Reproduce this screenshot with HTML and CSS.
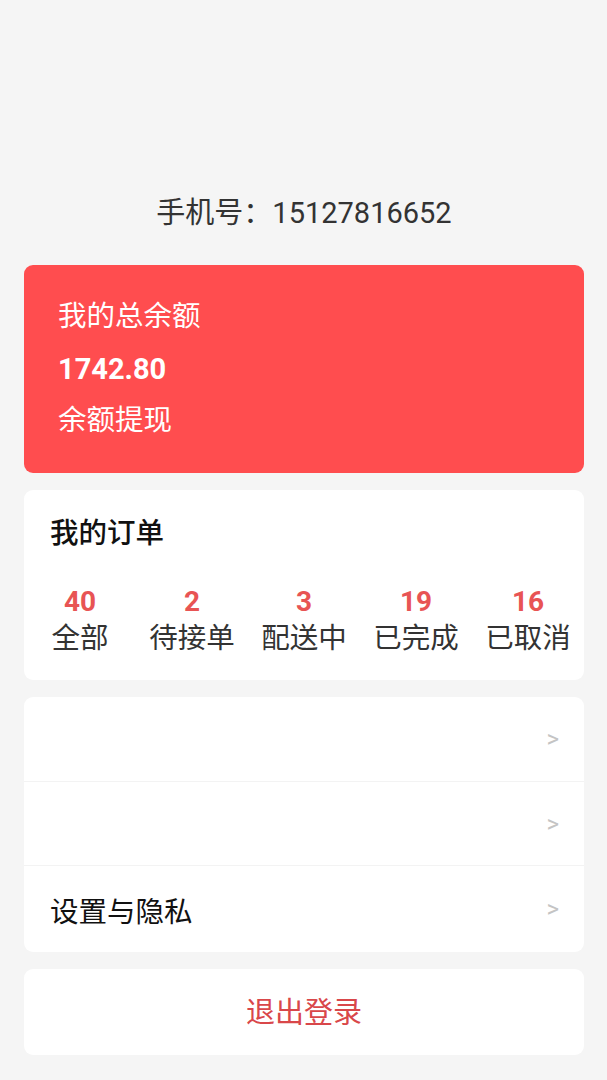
FILE: index.html
```html
<!DOCTYPE html>
<html lang="zh-CN">

<head>
    <meta charset="UTF-8" />
    <title>我的</title>
    <link rel="stylesheet" href="styles.css">
</head>

<body>
    <div class="page">
        <div class="header">手机号：15127816652</div>

        <div class="card balance">
            <div class="balance-row">我的总余额</div>
            <div class="balance-row balance-num">1742.80</div>
            <div class="balance-row">余额提现</div>
        </div>

        <div class="card orders">
            <div class="orders-title">我的订单</div>
            <div class="orders-grid">
                <div class="order-item">
                    <span class="order-num">40</span>
                    <span class="order-label">全部</span>
                </div>
                <div class="order-item">
                    <span class="order-num">2</span>
                    <span class="order-label">待接单</span>
                </div>
                <div class="order-item">
                    <span class="order-num">3</span>
                    <span class="order-label">配送中</span>
                </div>
                <div class="order-item">
                    <span class="order-num">19</span>
                    <span class="order-label">已完成</span>
                </div>
                <div class="order-item">
                    <span class="order-num">16</span>
                    <span class="order-label">已取消</span>
                </div>
            </div>
        </div>

        <div class="card menu">
            <div class="menu-row">
                <span class="menu-text"></span>
                <span class="arrow">&gt;</span>
            </div>
            <div class="menu-row">
                <span class="menu-text"></span>
                <span class="arrow">&gt;</span>
            </div>
            <div class="menu-row">
                <span class="menu-text">设置与隐私</span>
                <span class="arrow">&gt;</span>
            </div>
        </div>

        <div class="card logout">退出登录</div>
    </div>
</body>

</html>
```

FILE: styles.css
```css
body {
    margin: 0;
    background-color: #f5f5f5;
    font-family: Roboto, "Noto Sans CJK SC", sans-serif;
}

.page {
    display: flex;
    flex-direction: column;
    gap: 17px;
    padding: 0 23px 0 24px;
}

.header {
    padding-top: 193px;
    margin-bottom: 15px;
    line-height: 40px;
    font-size: 29px;
    color: #333;
    text-align: center;
}

.card {
    background-color: #fff;
    border-radius: 9px;
}

.balance {
    background-color: #ff4d4f;
    color: #fff;
    padding: 26px 34px;
}

.balance-row {
    line-height: 52px;
    font-size: 28.5px;
}

.balance-num {
    font-size: 29px;
    font-weight: bold;
}

.orders {
    padding: 18px 0 22px;
}

.orders-title {
    padding-left: 26px;
    line-height: 52px;
    font-size: 28.5px;
    font-weight: 500;
    color: #111;
}

.orders-grid {
    display: grid;
    grid-template-columns: repeat(5, 1fr);
    margin-top: 24px;
}

.order-item {
    display: flex;
    flex-direction: column;
    align-items: center;
}

.order-num {
    line-height: 36px;
    font-size: 28px;
    font-weight: bold;
    color: #e85454;
}

.order-label {
    line-height: 38px;
    font-size: 28.5px;
    color: #333;
}

.menu-row {
    display: flex;
    align-items: center;
    justify-content: space-between;
    height: 83px;
    padding: 0 25px 0 26px;
    border-top: 1px solid #f3f3f3;
}

.menu-row:first-child {
    height: 84px;
    border-top: none;
}

.menu-row:last-child {
    height: 86px;
}

.menu-text {
    font-size: 28.5px;
    color: #111;
}

.arrow {
    font-size: 24px;
    color: #c4c4c4;
}

.logout {
    height: 86px;
    line-height: 88px;
    font-size: 29px;
    color: #d9474a;
    text-align: center;
}
```
